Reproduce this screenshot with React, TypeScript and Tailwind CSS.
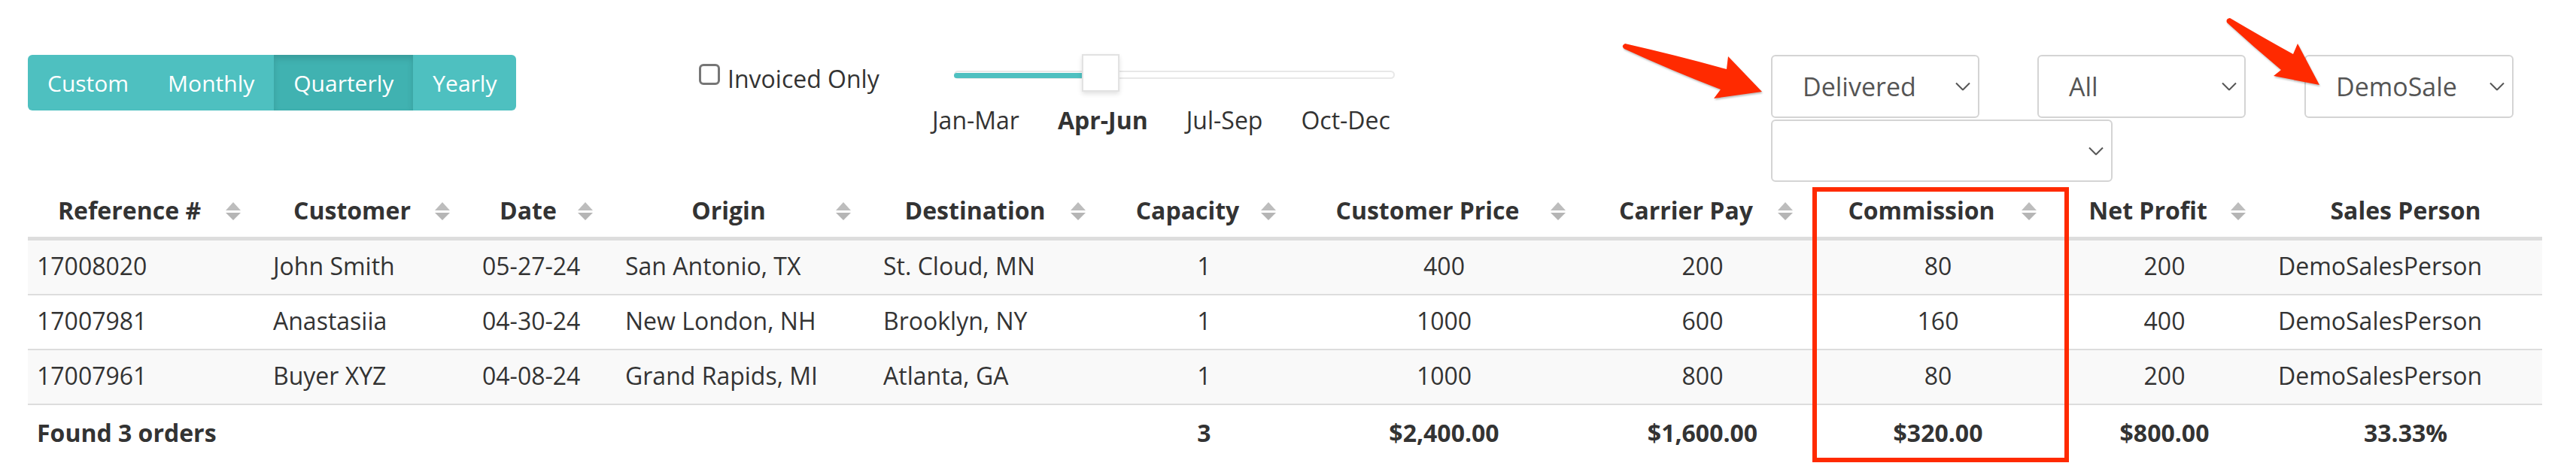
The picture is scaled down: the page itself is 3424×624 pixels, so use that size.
import React from 'react';

const columns = [
  { title: 'Reference #', width: 314, sort: true, align: 'left' },
  { title: 'Customer', width: 278, sort: true, align: 'left' },
  { title: 'Date', width: 190, sort: true, align: 'left' },
  { title: 'Origin', width: 343, sort: true, align: 'left' },
  { title: 'Destination', width: 312, sort: true, align: 'left' },
  { title: 'Capacity', width: 253, sort: true, align: 'center' },
  { title: 'Customer Price', width: 385, sort: true, align: 'center' },
  { title: 'Carrier Pay', width: 302, sort: true, align: 'center' },
  { title: 'Commission', width: 324, sort: true, align: 'center' },
  { title: 'Net Profit', width: 278, sort: true, align: 'center' },
  { title: 'Sales Person', width: 363, sort: false, align: 'left' },
];

const rows = [
  ['17008020', 'John Smith', '05-27-24', 'San Antonio, TX', 'St. Cloud, MN', '1', '400', '200', '80', '200', 'DemoSalesPerson'],
  ['17007981', 'Anastasiia', '04-30-24', 'New London, NH', 'Brooklyn, NY', '1', '1000', '600', '160', '400', 'DemoSalesPerson'],
  ['17007961', 'Buyer XYZ', '04-08-24', 'Grand Rapids, MI', 'Atlanta, GA', '1', '1000', '800', '80', '200', 'DemoSalesPerson'],
];

const totals = ['Found 3 orders', '', '', '', '', '3', '$2,400.00', '$1,600.00', '$320.00', '$800.00', '33.33%'];

function SortIcon() {
  return (
    <svg width="20" height="24" viewBox="0 0 20 24" className="absolute right-[31px] top-1/2 -translate-y-1/2">
      <path d="M10 0 L20 11 L0 11 Z" fill="#bdbdbd" />
      <path d="M0 14 L20 14 L10 24 Z" fill="#b5b5b5" />
    </svg>
  );
}

function Chevron() {
  return (
    <svg width="20" height="11" viewBox="0 0 20 11" className="absolute right-[10px] top-1/2 -translate-y-1/2">
      <path d="M1 1 L10 10 L19 1" fill="none" stroke="#555" strokeWidth="2" />
    </svg>
  );
}

function Select({ value, className }: { value: string; className: string }) {
  return (
    <div className={`relative flex shrink-0 items-center rounded-[6px] border-2 border-[#d4d4d4] bg-white pl-[40px] text-[34px] text-[#555] ${className}`}>
      <span>{value}</span>
      <Chevron />
    </div>
  );
}

const periods = ['Custom', 'Monthly', 'Quarterly', 'Yearly'];

export default function App() {
  return (
    <div className="relative h-[624px] w-[3424px] overflow-hidden bg-white font-['Open_Sans',sans-serif] text-[#333]">
      <div className="flex h-[247px] items-start pt-[73px]">
        {/* period buttons */}
        <div className="w-[929px] shrink-0 pl-[37px]">
          <div className="inline-flex h-[74px] overflow-hidden rounded-[6px] text-[30px] text-white">
            {periods.map((p) => (
              <div
                key={p}
                className={
                  p === 'Quarterly'
                    ? 'flex items-center bg-[#40b2b1] px-[26px] shadow-[inset_0_5px_8px_rgba(0,0,0,0.13)]'
                    : 'flex items-center bg-[#4ec0c0] px-[26px]'
                }
              >
                {p}
              </div>
            ))}
          </div>
        </div>

        {/* invoiced only */}
        <div className="mt-[8px] flex w-[310px] shrink-0 items-start text-[32px] leading-[48px]">
          <div className="mt-[4px] h-[28px] w-[28px] rounded-[6px] border-[3px] border-[#767676] bg-white" />
          <span className="ml-[10px]">Invoiced Only</span>
        </div>

        {/* quarter slider */}
        <div className="-mt-[1px] w-[1115px] shrink-0">
          <div className="relative ml-[29px] h-[50px] w-[586px]">
            <div className="absolute left-0 top-[22px] h-[11px] w-[586px] rounded-full border-2 border-[#e8e8e8] bg-white" />
            <div className="absolute left-0 top-[25px] h-[7px] w-[172px] rounded-l-full bg-[#4ec0c0]" />
            <div className="absolute left-[170px] top-0 h-[50px] w-[50px] border-2 border-[#e2e2e2] bg-white shadow-[0_3px_6px_rgba(0,0,0,0.12)]" />
          </div>
          <div className="mt-[14px] flex gap-[51px] text-[32px] leading-[48px]">
            <span>Jan-Mar</span>
            <span className="font-bold">Apr-Jun</span>
            <span>Jul-Sep</span>
            <span>Oct-Dec</span>
          </div>
        </div>

        {/* filters */}
        <div className="flex flex-col">
          <div className="flex">
            <Select value="Delivered" className="h-[84px] w-[277px]" />
            <Select value="All" className="ml-[77px] h-[84px] w-[277px]" />
            <Select value="DemoSale" className="ml-[78px] h-[84px] w-[278px]" />
          </div>
          <Select value="" className="mt-[2px] h-[83px] w-[454px]" />
        </div>
      </div>

      {/* orders table */}
      <div className="pl-[37px]">
        <table className="w-[3342px] table-fixed border-collapse text-[32px] leading-[48px]">
          <colgroup>
            {columns.map((c) => (
              <col key={c.title} style={{ width: c.width }} />
            ))}
          </colgroup>
          <thead>
            <tr>
              {columns.map((c) => (
                <th
                  key={c.title}
                  className={
                    c.sort
                      ? 'relative border-b-[5px] border-[#dddddd] pb-[11px] pl-[12px] pr-[56px] pt-[9px] text-center font-bold'
                      : 'relative border-b-[5px] border-[#dddddd] px-[12px] pb-[11px] pt-[9px] text-center font-bold'
                  }
                >
                  {c.title}
                  {c.sort && <SortIcon />}
                </th>
              ))}
            </tr>
          </thead>
          <tbody>
            {rows.map((r, i) => (
              <tr key={r[0]} className={i % 2 === 0 ? 'bg-[#f9f9f9]' : 'bg-white'}>
                {r.map((v, j) => (
                  <td
                    key={j}
                    className={
                      columns[j].align === 'center'
                        ? 'border-b-2 border-[#dddddd] px-[12px] pb-[13px] pt-[10px] text-center'
                        : 'border-b-2 border-[#dddddd] px-[12px] pb-[13px] pt-[10px] text-left'
                    }
                  >
                    {v}
                  </td>
                ))}
              </tr>
            ))}
            <tr>
              {totals.map((v, j) => (
                <td
                  key={j}
                  className={
                    j === 0
                      ? 'px-[12px] pb-[14px] pt-[13px] text-left font-bold whitespace-nowrap'
                      : 'px-[12px] pb-[14px] pt-[13px] text-center font-bold'
                  }
                >
                  {v}
                </td>
              ))}
            </tr>
          </tbody>
        </table>
      </div>

      {/* annotation: commission highlight */}
      <div className="pointer-events-none absolute left-[2409px] top-[249px] h-[366px] w-[341px] border-[6px] border-[#ff2a00]" />

      {/* annotation arrows */}
      <svg
        width="3424"
        height="624"
        viewBox="0 0 3424 624"
        className="pointer-events-none absolute left-0 top-0 drop-shadow-[1px_2px_1px_rgba(0,0,0,0.25)]"
      >
        <path
          d="M2160 58 Q2230 74 2295 92 L2297 75 L2342 122 L2278 131 L2287 119 Q2222 94 2159 65 Q2154 61 2160 58 Z"
          fill="#ff2a00"
        />
        <path
          d="M2964 24 Q3008 50 3048 72 L3054 58 L3083 113 L3022 101 L3032 93 Q2995 62 2960 30 Q2958 25 2964 24 Z"
          fill="#ff2a00"
        />
      </svg>
    </div>
  );
}
